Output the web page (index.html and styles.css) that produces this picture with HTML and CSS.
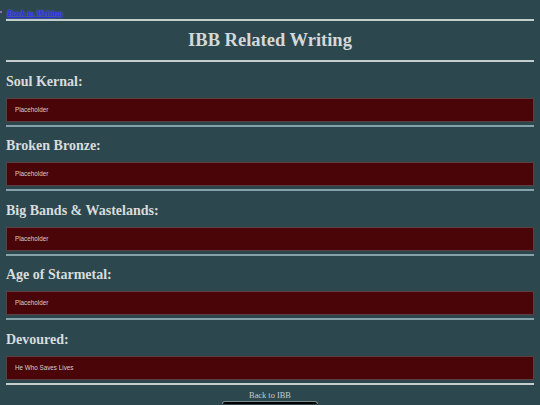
FILE: index.html
```html
<!DOCTYPE html>
<html>
<head>
<meta charset="utf-8">
<title>IBB Related Writing</title>
<link rel="stylesheet" href="styles.css">
</head>
<body>
<ul class="nav">
  <li class="nav-item"><a class="nav-link" href="#">Back to Writing</a></li>
</ul>
<hr class="rule-main">
<h1 class="title">IBB Related Writing</h1>
<hr class="rule-main">
<main class="sections">
  <section class="entry">
    <h2 class="entry-title">Soul Kernal:</h2>
    <div class="entry-box">Placeholder</div>
    <hr class="rule-section">
  </section>
  <section class="entry">
    <h2 class="entry-title">Broken Bronze:</h2>
    <div class="entry-box">Placeholder</div>
    <hr class="rule-section">
  </section>
  <section class="entry">
    <h2 class="entry-title">Big Bands &amp; Wastelands:</h2>
    <div class="entry-box">Placeholder</div>
    <hr class="rule-section">
  </section>
  <section class="entry">
    <h2 class="entry-title">Age of Starmetal:</h2>
    <div class="entry-box">Placeholder</div>
    <hr class="rule-section">
  </section>
  <section class="entry">
    <h2 class="entry-title">Devoured:</h2>
    <div class="entry-box">He Who Saves Lives</div>
    <hr class="rule-main rule-last">
  </section>
</main>
<footer class="footer">
  <a class="footer-link" href="#">Back to IBB</a>
  <div class="footer-button"></div>
</footer>
</body>
</html>
```
FILE: styles.css
```css
html, body {
  margin: 0;
  padding: 0;
}
body {
  background: #2c474d;
  font-family: "Liberation Serif", "Times New Roman", serif;
  color: #d6dada;
  overflow: hidden;
  height: 405px;
}
.nav {
  list-style: none;
  margin: 0;
  padding: 5px 0 0 7px;
  line-height: 12px;
  height: 12px;
}
.nav-item {
  position: relative;
}
.nav-item::before {
  content: "";
  position: absolute;
  left: -7px;
  top: 6px;
  width: 2px;
  height: 2px;
  border-radius: 50%;
  background: #b07ad0;
}
.nav-link {
  font-size: 8.6px;
  font-style: italic;
  font-weight: bold;
  color: #2c2ce0;
  text-decoration: underline;
  text-shadow: 0 0 2px #6a7cff;
}
.rule-main {
  margin: 2px 6px 0;
  height: 2px;
  border: 0;
  background: #c4cecd;
}
.title {
  margin: 0;
  text-align: center;
  font-size: 18.5px;
  font-weight: bold;
  line-height: 39px;
  color: #d4d8d8;
}
.title + .rule-main {
  margin-top: 0;
}
.sections {
  display: flex;
  flex-direction: column;
}
.entry {
  padding: 0 6px;
  display: flex;
  flex-direction: column;
}
.entry-title {
  margin: 0;
  padding-top: 9.6px;
  font-size: 14px;
  line-height: 20px;
  font-weight: bold;
  color: #d8dcdc;
}
.entry-box {
  margin-top: 6px;
  height: 22px;
  line-height: 22px;
  padding-left: 8px;
  background: #4a0508;
  border: 1px solid #5f3e42;
  font-family: "Liberation Sans", Arial, sans-serif;
  font-size: 6.3px;
  color: #d8cccc;
}
.rule-section {
  margin: 3px 0 0;
  height: 2px;
  border: 0;
  background: #86a2a8;
}
.entry .rule-last {
  margin: 3px 0 0;
}
.footer {
  display: flex;
  flex-direction: column;
  align-items: center;
}
.footer-link {
  margin-top: 6.5px;
  font-size: 8.4px;
  line-height: 10px;
  color: #c8cccc;
  text-decoration: none;
}
.footer-button {
  width: 94px;
  height: 2px;
  background: #000;
  border: 1px solid #7a8a8c;
  border-bottom: 0;
  border-radius: 12px 12px 0 0;
}
```
